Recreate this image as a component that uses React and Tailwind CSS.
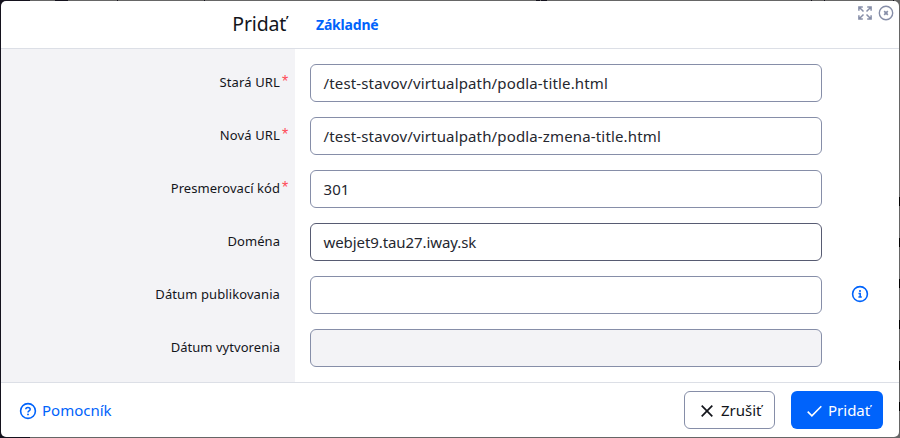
const FIELDS = [
  { label: 'Stará URL', required: true, value: '/test-stavov/virtualpath/podla-title.html', lt: 'tracking-[0.13px]', vt: 'tracking-[0.15px]' },
  { label: 'Nová URL', required: true, value: '/test-stavov/virtualpath/podla-zmena-title.html', lt: 'tracking-[0.15px]', vt: 'tracking-[0.15px]' },
  { label: 'Presmerovací kód', required: true, value: '301', lt: 'tracking-[0.05px]', vt: 'tracking-[0.1px]' },
  { label: 'Doména', value: 'webjet9.tau27.iway.sk', active: true, lt: 'tracking-[0.05px]', vt: 'tracking-[-0.08px]' },
  { label: 'Dátum publikovania', value: '', info: true, lt: 'tracking-[0.1px]', vt: '' },
  { label: 'Dátum vytvorenia', value: '', disabled: true, lt: 'tracking-[0.05px]', vt: '' },
];

function ExpandIcon() {
  return (
    <svg width="14" height="14" viewBox="0 0 14 14" fill="none" stroke="#868ea8" strokeWidth="1.5">
      <path d="M.9 4.8V.9h3.9M9.2.9h3.9v3.9M13.1 9.2v3.9H9.2M4.8 13.1H.9V9.2M1.2 1.2l4.3 4.3M12.8 1.2L8.5 5.5M12.8 12.8L8.5 8.5M1.2 12.8l4.3-4.3" />
    </svg>
  );
}

function CloseIcon() {
  return (
    <svg width="16" height="16" viewBox="0 0 16 16" fill="none" stroke="#868ea8" strokeWidth="1.4">
      <circle cx="8" cy="8" r="6.7" />
      <path d="M6.200 6.200l3.600 3.600M9.800 6.200l-3.600 3.600" strokeWidth="1.7" />
    </svg>
  );
}

function InfoIcon() {
  return (
    <svg width="18" height="18" viewBox="0 0 18 18" fill="none" stroke="#0063fb" strokeWidth="1.6">
      <circle cx="9" cy="9" r="7.4" />
      <path d="M7.5 8.4h1.7v3.600M7.400 12.100h3.400" strokeWidth="1.5" />
      <circle cx="9" cy="6" r="1.050" fill="#0063fb" stroke="none" />
    </svg>
  );
}

function HelpIcon() {
  return (
    <svg width="18" height="18" viewBox="0 0 18 18" fill="none" stroke="#0063fb" strokeWidth="1.6">
      <circle cx="9" cy="9" r="7.4" />
      <path d="M6.8 7.2c0-1.1.8-1.8 2.1-1.8 1.400 0 2.300.7 2.300 1.900 0 1.600-2.200 1.600-2.200 3.100" strokeWidth="1.5" />
      <circle cx="9" cy="12.400" r=".95" fill="#0063fb" stroke="none" />
    </svg>
  );
}

function Field({ field }) {
  return (
    <div className="flex h-[38px]">
      <div className="flex w-[294px] shrink-0 justify-end pr-[6px]">
        <span className={`whitespace-nowrap text-[13px] leading-[36px] text-[#13151b] ${field.lt}`}>{field.label}</span>
        <span className="w-[9px] pl-[2px] font-['Liberation_Sans',sans-serif] text-[16px] leading-[35px] text-[#ff4b58]">{field.required ? '*' : ''}</span>
      </div>
      <div className="w-[15px] shrink-0" />
      <div className={`w-[512px] shrink-0 rounded-[6px] border pl-[12.5px] text-[15px] leading-[36px] text-[#25272f] ${field.active ? 'border-[#575b72]' : 'border-[#868ea8]'} ${field.disabled ? 'bg-[#f3f3f6]' : 'bg-white'}`}>
        <span className={`whitespace-nowrap ${field.vt}`}>{field.value}</span>
      </div>
      {field.info && (
        <div className="flex h-[36px] items-center pl-[29px]">
          <InfoIcon />
        </div>
      )}
    </div>
  );
}

function Backdrop() {
  return (
    <div className="absolute inset-0 flex flex-col bg-[#14121d]">
      <div className="flex h-[6px]">
        <div className="w-[30px]" />
        <div className="w-[25px] bg-[#666]" />
        <div className="w-[13px]" />
        <div className="w-[49px] bg-[#666]" />
        <div className="w-px" />
        <div className="w-[86px] bg-[#666]" />
        <div className="w-px" />
        <div className="w-[331px] bg-[#666]" />
        <div className="w-[4px]" />
        <div className="w-px bg-[#666]" />
        <div className="w-[6px]" />
        <div className="w-[264px] bg-[#666]" />
        <div className="w-px" />
        <div className="w-[12px] bg-[#666]" />
        <div className="w-px" />
        <div className="w-[68px] bg-[#666]" />
        <div className="w-px" />
        <div className="grow bg-[#666]" />
      </div>
      <div className="flex h-[426px] flex-col items-end overflow-hidden">
        <div className="h-[191px] w-[6px] shrink-0 bg-[#666]" />
        {[0, 1, 2, 3, 4, 5].map((i) => (
          <div key={i} className="h-[41px] w-[6px] shrink-0 bg-[#666]">
            <div className="h-[9px] bg-black" />
          </div>
        ))}
      </div>
      <div className="ml-[30px] h-[6px] bg-[#666]" />
    </div>
  );
}

export default function App() {
  return (
    <div className="relative h-[438px] w-[900px] overflow-hidden p-px font-['Noto_Sans',sans-serif]">
      <Backdrop />
      <div className="relative flex h-[436px] w-[898px] flex-col overflow-hidden rounded-[5px] bg-white">
        <header className="flex h-[48px] shrink-0 border-b border-[#dcdfe6]">
          <div className="w-[285px] text-right text-[19.5px] leading-[45px] tracking-[-0.2px] text-[#13151b]">Pridať</div>
          <div className="pl-[30px] text-[14px] font-bold leading-[47px] tracking-[-0.2px] text-[#0063fb]">Základné</div>
          <div className="ml-auto flex h-[24px] items-center gap-[6px] pr-[5px]">
            <ExpandIcon />
            <CloseIcon />
          </div>
        </header>
        <main className="flex h-[333px] shrink-0 flex-col gap-[15px] bg-[linear-gradient(to_right,#f3f3f6_294px,#fff_294px)] pt-[15px]">
          {FIELDS.map((f) => (
            <Field key={f.label} field={f} />
          ))}
        </main>
        <footer className="flex grow items-center border-t border-[#dcdfe6] pl-[18px] pr-[16px] text-[15px]">
          <a className="flex items-center gap-[5px] text-[#0063fb]">
            <span className="pt-px">
              <HelpIcon />
            </span>
            <span>Pomocník</span>
          </a>
          <button className="ml-auto flex h-[38px] w-[91px] items-center rounded-[6px] border border-[#868ea8] pl-[16px] text-[#13151b]">
            <svg className="mt-px" width="12" height="12" viewBox="0 0 12 12" fill="none" stroke="#13151b" strokeWidth="1.7">
              <path d="M.7.7l10.600 10.600M11.300.7L.7 11.300" />
            </svg>
            <span className="ml-[8px] whitespace-nowrap">Zrušiť</span>
          </button>
          <button className="ml-[16px] flex h-[38px] w-[92px] items-center rounded-[6px] bg-[#0063fb] pl-[16px] text-white">
            <svg className="mt-px" width="15" height="12" viewBox="0 0 15 12" fill="none" stroke="#fff" strokeWidth="1.6">
              <path d="M.7 6.600l4.200 4.200L14.300 1.200" />
            </svg>
            <span className="ml-[6px] whitespace-nowrap">Pridať</span>
          </button>
        </footer>
      </div>
    </div>
  );
}
